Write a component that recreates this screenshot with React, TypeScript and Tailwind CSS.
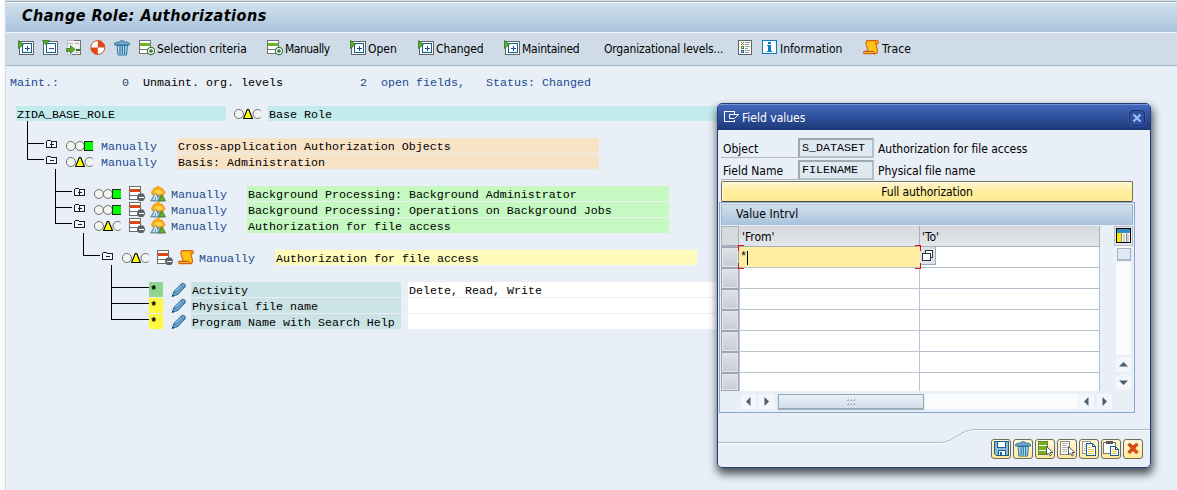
import React from "react";

const UI = "font-['DejaVu_Sans_Condensed','DejaVu_Sans',sans-serif] [font-stretch:condensed]";
const MONO = "font-['Liberation_Mono',monospace] text-[11.67px]";

type Kids = { children?: React.ReactNode };

function Icon({ children, smooth = false }: Kids & { smooth?: boolean }) {
  return (
    <svg width="16" height="16" viewBox="0 0 16 16" className="block shrink-0" shapeRendering={smooth ? "auto" : "crispEdges"}>
      {children}
    </svg>
  );
}

function ExpandIcon({ minus = false }: { minus?: boolean }) {
  return (
    <Icon>
      <rect x="1.5" y="1.5" width="14" height="13" fill="#fff" stroke="#5f6468" />
      <rect x="4.5" y="3.5" width="9" height="9" fill="#fff" stroke="#0b6394" />
      <path d="M6.500 8h5" stroke="#2b4c9a" />
      {!minus && <path d="M9 5.500v5" stroke="#2b4c9a" />}
      {minus ? (
        <path d="M.5 .5h7L4 5z" fill="#5cae1b" stroke="#2d7433" strokeWidth=".8" shapeRendering="auto" />
      ) : (
        <path d="M.5 .5v8L5.500 4.500z" fill="#5cae1b" stroke="#2d7433" strokeWidth=".8" shapeRendering="auto" />
      )}
    </Icon>
  );
}

function ListArrowIcon() {
  return (
    <Icon>
      <path d="M1.500 .5h13v14h-13z" fill="#f1f3f4" />
      <path d="M1.500 6V.5H8M1.500 12v2.500H6" stroke="#b9bdc0" fill="none" />
      <path d="M8 .5h6.500v14H6" fill="none" stroke="#6d7275" />
      <path d="M2 3.500h5M9 3.500h4M9 12.500h4" stroke="#b5b5b5" />
      <path d="M10 9.500h4" stroke="#2d7433" strokeWidth="2" />
      <path d="M.5 8.500h4V5.500l4.500 4-4.500 4V11.500h-4z" fill="#64b020" stroke="#2d7433" strokeWidth=".8" shapeRendering="auto" />
    </Icon>
  );
}

function QuarterIcon() {
  return (
    <Icon smooth>
      <circle cx="7.800" cy="7.500" r="7" fill="#fff" stroke="#c8501f" />
      <path d="M7.800 7.500V.5a7 7 0 0 1 7 7zM7.800 7.500v7a7 7 0 0 1-7-7z" fill="#dc4a12" />
    </Icon>
  );
}

function TrashIcon() {
  return (
    <Icon smooth>
      <path d="M3 5.500h10.500l-1 9.500H4z" fill="#b9dcee" stroke="#2a75a4" />
      <path d="M6 6v8M8.300 6v8M10.600 6v8" stroke="#2a75a4" strokeWidth="1.200" />
      <path d="M.5 5V3.500C2.500 2 5 2 5.500 2c0-1.700 5-1.700 5 0 2 0 4 .3 5 1.500V5z" fill="#7ba6c8" stroke="#2a75a4" />
    </Icon>
  );
}

function RowPlusIcon() {
  return (
    <Icon>
      <rect x=".5" y=".5" width="11" height="13" fill="#fff" stroke="#6f7376" />
      <path d="M0 9.500h11" stroke="#6f7376" />
      <path d="M1 3h10v3H1z" fill="#71b31e" />
      <circle cx="12" cy="11" r="3.600" fill="#fff" stroke="#3f7d45" strokeWidth="1.200" shapeRendering="auto" />
      <path d="M10 11h4M12 9v4" stroke="#2f7038" strokeWidth="1.300" shapeRendering="auto" />
    </Icon>
  );
}

function RowMinusIcon() {
  return (
    <Icon>
      <rect x=".5" y=".5" width="11" height="13" fill="#fff" stroke="#6a6e72" />
      <path d="M0 9.500h11" stroke="#6a6e72" />
      <path d="M1 3h10v3H1z" fill="#dc4a12" />
      <circle cx="12" cy="11.200" r="3.900" fill="#5d6266" shapeRendering="auto" />
      <path d="M9.500 11.500h5" stroke="#fff" strokeWidth="1.200" />
    </Icon>
  );
}

function LegendIcon() {
  return (
    <Icon>
      <rect x=".5" y=".5" width="13" height="14" fill="#fff" stroke="#5f6468" />
      <path d="M3 2h1v1H3zM5 2h1v1H5zM4 3h1v1H4zM3 4h1v1H3zM5 4h1v1H5z" fill="#a07b15" />
      <path d="M3 6h3v3H3z" fill="#3f8b2b" />
      <path d="M3 10h3v3H3z" fill="#0f6b9c" />
      <path d="M4 7h1v1H4zM4 11h1v1H4z" fill="#fff" />
      <path d="M7 2.500h5M7 4.500h4M7 6.500h5M7 8.500h3M7 10.500h5M7 12.500h4" stroke="#9a9a9a" />
    </Icon>
  );
}

function InfoIcon() {
  return (
    <Icon>
      <rect x=".5" y=".5" width="14" height="13" fill="#fff" stroke="#087fc0" />
      <path d="M6 2h3v2H6zM5 5h4v6h1v1H5v-1h1V6H5z" fill="#087fc0" />
    </Icon>
  );
}

function ScrollIcon() {
  return (
    <Icon smooth>
      <path
        d="M4 .6h10.200c1.600.3 1.600 3.200 0 3.400H13.200c-.3 2 1.300 4.500 1.300 7 0 2-1 2.600-2 2.600H1.500C.3 13.600.3 11.400 1.500 11.200H4.600C6 9.500 3.200 7 3 4 2.900 2 3.200.8 4 .6z"
        fill="#ffc211"
        stroke="#d4601a"
        strokeWidth="1.100"
      />
      <path d="M1 11.400h9.300c1.300.3 1.300 1.800.5 2.200M13 1.800c-.5.8-.5 1.600.2 2.200" fill="none" stroke="#c94d14" />
    </Icon>
  );
}

function MountainIcon() {
  return (
    <Icon smooth>
      <path d="M2 8C1.200 6 2.200 4.800 3 4.500 3 2.500 4.500 2 5.500 2c1-1.800 3.800-1.800 5 0 1.500 0 3 .8 3 2.500C15 5.500 15 7 14.300 8L12 10H4z" fill="#ffb00f" stroke="#f18a13" />
      <path d="M4 8a4.500 4.300 0 0 1 9 0z" fill="#ffd04a" />
      <path d="M.6 15 5.500 7l3 4 1.500-1.500L12 15z" fill="#7fb6d5" stroke="#5b7380" strokeWidth=".8" />
      <path d="M5.500 8 3.500 14M5.800 9l1.200 5" stroke="#e3f2fa" fill="none" />
      <path d="M8.500 15 12 8.500 15.500 15z" fill="#69ac28" stroke="#47742f" strokeWidth=".8" />
    </Icon>
  );
}

function PencilIcon() {
  return (
    <Icon smooth>
      <path d="M1.500 14.200 3 9.500 11 1.600c1.300-1.200 4.300 1.500 3 3L6.500 12.500z" fill="#7fb2d6" stroke="#2d6f9c" strokeWidth="1.100" />
      <path d="M10 2.800l3 3M5 10.500l6-6M3 9.800l3 2.500" stroke="#2d6f9c" strokeWidth=".9" />
      <path d="M4.500 9 10 3.500" stroke="#c3e0f0" strokeWidth=".8" />
      <path d="M.8 15l.9-2.700 1.600 1.800z" fill="#174b72" />
    </Icon>
  );
}

function Lights({ state }: { state: "green" | "yellow" }) {
  return (
    <svg width="28" height="16" viewBox="0 0 28 16" className="block shrink-0">
      <circle cx="4.900" cy="8" r="4.500" fill="#f3f3f0" stroke="#6f6f6f" />
      {state === "green" ? (
        <>
          <circle cx="13.900" cy="8" r="4.500" fill="#f3f3f0" stroke="#6f6f6f" />
          <path d="M27 3.500h-8.500v9H27" fill="#0f0" stroke="#222" shapeRendering="crispEdges" />
        </>
      ) : (
        <>
          <path d="M26.700 4.800a4.500 4.500 0 1 0 0 6.400" fill="#f3f3f0" stroke="#6f6f6f" />
          <path d="M9.600 12.500 13.300 3.500h1.400L18.400 12.500z" fill="#ff0" stroke="#000" strokeWidth="1.100" />
        </>
      )}
    </svg>
  );
}

function Folder({ open = false }: { open?: boolean }) {
  return (
    <svg width="12" height="16" viewBox="0 0 12 16" className="block shrink-0" shapeRendering="crispEdges">
      <path d="M.5 9.500v-6l1-1h3l1 1h5v6z" fill="#f4f6fb" stroke="#1c1c38" />
      <path d="M4 6.500h4" stroke="#1c1c38" />
      {!open && <path d="M5.500 4v5" stroke="#1c1c38" />}
    </svg>
  );
}

function Tool({ w, icon, label, tight = "" }: { w: string; icon?: React.ReactNode; label?: string; tight?: string }) {
  return (
    <div className={`flex h-4 shrink-0 items-center gap-0.5 whitespace-nowrap ${w}`}>
      {icon}
      {label && <span className={`pt-0.5 text-[12px] leading-4 ${tight}`}>{label}</span>}
    </div>
  );
}

function Toolbar() {
  return (
    <div className={`flex h-[33px] shrink-0 items-center border-b border-[#9fb6c9] bg-[#cfdce7] pb-[3px] pl-3 ${UI}`}>
      <Tool w="w-6" icon={<ExpandIcon />} />
      <Tool w="w-6" icon={<ExpandIcon minus />} />
      <Tool w="w-6" icon={<ListArrowIcon />} />
      <Tool w="w-6" icon={<QuarterIcon />} />
      <Tool w="w-[25px]" icon={<TrashIcon />} />
      <Tool w="w-32" icon={<RowPlusIcon />} label="Selection criteria" tight="tracking-[-0.1px]" />
      <Tool w="w-[83px]" icon={<RowPlusIcon />} label="Manually" tight="tracking-[-0.5px]" />
      <Tool w="w-[68px]" icon={<ExpandIcon />} label="Open" />
      <Tool w="w-[86px]" icon={<ExpandIcon />} label="Changed" tight="tracking-[-0.1px]" />
      <Tool w="w-[100px]" icon={<ExpandIcon />} label="Maintained" tight="tracking-[-0.25px]" />
      <Tool w="w-[134px]" label="Organizational levels..." tight="tracking-[-0.18px]" />
      <Tool w="w-6" icon={<LegendIcon />} />
      <Tool w="w-[101px]" icon={<InfoIcon />} label="Information" />
      <Tool w="w-20" icon={<ScrollIcon />} label="Trace" tight="pl-px tracking-[0.1px]" />
    </div>
  );
}

function Band({ className, children }: Kids & { className: string }) {
  return <div className={`h-[15px] shrink-0 pl-px leading-[18px] ${className}`}>{children}</div>;
}

function Row({ className = "", children }: Kids & { className?: string }) {
  return <div className={`flex h-4 items-start whitespace-pre ${className}`}>{children}</div>;
}

function Manually({ className }: { className: string }) {
  return <span className={`shrink-0 leading-[18px] text-[#1b4a94] ${className}`}>Manually</span>;
}

function ObjectRow({ open = false, state, label }: { open?: boolean; state: "green" | "yellow"; label: string }) {
  return (
    <Row className="pl-[68px]">
      <Folder open={open} />
      <div className="ml-2 flex"><Lights state={state} /></div>
      <div className="ml-[7px] flex gap-[5px]"><RowMinusIcon /><MountainIcon /></div>
      <Manually className="ml-[5px] w-[76px]" />
      <Band className="w-[422px] bg-[#c5f9c1]">{label}</Band>
    </Row>
  );
}

function FieldRow({ mark, label, value }: { mark: string; label: string; value?: string }) {
  return (
    <Row className="pl-[143px]">
      <div className={`h-[15px] w-3.5 shrink-0 pl-px text-[12px] font-bold leading-[18px] ${mark}`}>*</div>
      <div className="ml-2 w-5"><PencilIcon /></div>
      <Band className="w-[210px] bg-[#cbe3e4]">{label}</Band>
      <Band className="ml-[7px] w-[312px] bg-white">{value}</Band>
    </Row>
  );
}

function Tree() {
  return (
    <div className={`relative ${MONO}`}>
      <svg width="160" height="224" className="absolute left-0 top-0" fill="none" stroke="#000" shapeRendering="crispEdges">
        <path d="M21.500 15v38.500H38M21 37.500h17M49.500 63v54.500H66M49 85.500h17M49 101.500h17M77.500 127v22.500H94M105.500 159v54.500H143M105 181.500h38M105 197.500h38" />
      </svg>
      <Row className="pl-2.5">
        <Band className="w-[210px] bg-[#c3eaec]">ZIDA_BASE_ROLE</Band>
        <div className="ml-2 w-[34px]"><Lights state="yellow" /></div>
        <Band className="w-[452px] bg-[#c3eaec]">Base Role</Band>
      </Row>
      <Row />
      <Row className="pl-10">
        <Folder />
        <div className="ml-2 flex"><Lights state="green" /></div>
        <Manually className="ml-[7px] w-[76px]" />
        <Band className="w-[422px] bg-[#f9e3c7]">Cross-application Authorization Objects</Band>
      </Row>
      <Row className="pl-10">
        <Folder open />
        <div className="ml-2 flex"><Lights state="yellow" /></div>
        <Manually className="ml-[7px] w-[76px]" />
        <Band className="w-[422px] bg-[#f9e3c7]">Basis: Administration</Band>
      </Row>
      <Row />
      <ObjectRow state="green" label="Background Processing: Background Administrator" />
      <ObjectRow state="green" label="Background Processing: Operations on Background Jobs" />
      <ObjectRow open state="yellow" label="Authorization for file access" />
      <Row />
      <Row className="pl-24">
        <Folder open />
        <div className="ml-2 flex"><Lights state="yellow" /></div>
        <div className="ml-[7px] flex gap-[5px]"><RowMinusIcon /><ScrollIcon /></div>
        <Manually className="ml-[5px] w-[76px]" />
        <Band className="w-[422px] bg-[#fffbbb]">Authorization for file access</Band>
      </Row>
      <Row />
      <FieldRow mark="bg-[#90d58d]" label="Activity" value="Delete, Read, Write" />
      <FieldRow mark="bg-[#fff740]" label="Physical file name" />
      <FieldRow mark="bg-[#fff740]" label="Program Name with Search Help" />
    </div>
  );
}

function Arrow({ d }: { d: string }) {
  return (
    <div className="flex size-[15px] shrink-0 items-center justify-center bg-[#f3f7fb]">
      <svg width="9" height="9" viewBox="0 0 9 9"><path d={d} fill="#4a5f6e" /></svg>
    </div>
  );
}
const LEFT = "M6.500 0v9L2 4.500z";
const RIGHT = "M2.500 0v9L7 4.500z";
const UP = "M0 6.500h9L4.500 2z";
const DOWN = "M0 2.500h9L4.500 7z";

function Property({ name, value, text }: { name: string; value: string; text: string }) {
  return (
    <div className="flex h-[22px] text-[12px] leading-[22px]">
      <div className="h-[20px] w-[77px] border-b border-[#b3b9be] pl-0.5">{name}</div>
      <div className={`h-[20px] w-[76px] border-2 border-[#a0a8ae] border-b-[#b5bfc6] border-r-[#b5bfc6] bg-[#dfe9f1] pl-[2px] leading-[17px] ${MONO}`}>{value}</div>
      <div className="pl-1 tracking-[-0.03px]">{text}</div>
    </div>
  );
}

function GridRow({ active = false, last = false }: { active?: boolean; last?: boolean }) {
  return (
    <div className={`flex ${last ? "h-[18px]" : "h-[21px]"}`}>
      <div className="h-full w-[18px] border border-[#9da5b2] bg-gradient-to-b from-[#dfe3e8] to-[#c7ccd4] shadow-[inset_0_0_0_1px_#e2e5ea]" />
      {active ? (
        <div className="relative h-full w-[181px] border-b border-[#bcc5d0] bg-[#ffee9f] pl-px font-['Liberation_Mono',monospace] text-[12px] leading-[21px]">
          *
          <span className="absolute left-2 top-1 h-[14px] w-px bg-black" />
          <svg width="185" height="24" className="absolute -left-px -top-0.5" fill="none" stroke="#e30613" shapeRendering="crispEdges">
            <path d="M.5 6V.5H6M177 .5h5.500V6M.5 18v5.500H6M177 23.500h5.500V18" />
          </svg>
        </div>
      ) : (
        <div className={`h-full w-[181px] border-l border-r border-[#bcc5d0] bg-white ${last ? "" : "border-b"}`} />
      )}
      <div className={`h-full w-[180px] border-r border-[#b5bfcc] bg-white ${last ? "" : "border-b"}`}>
        {active && (
          <div className="flex h-[18px] w-4 items-center justify-center border-b border-r border-[#9ba9bd] bg-[#dde3ee]">
            <svg width="12" height="12" fill="#fff" stroke="#333" shapeRendering="crispEdges"><path d="M3.500.5h7v7h-7z" /><path d="M.5 3.500h8v7h-8z" /></svg>
          </div>
        )}
      </div>
    </div>
  );
}

function ActionButton({ children }: Kids) {
  return (
    <div className="flex size-5 items-center justify-center rounded-[3px] border-[1.5px] border-[#716b5b] bg-gradient-to-b from-[#fff9da] to-[#ffe996]">
      {children}
    </div>
  );
}

function Cursor() {
  return <path d="M9.500 5.500v8.500l2-2 1.500 3 1.500-1-1.500-2.500h3z" fill="#fff" stroke="#565b60" shapeRendering="auto" />;
}

function Actions() {
  return (
    <div className="flex gap-0.5">
      <ActionButton>
        <Icon>
          <path d="M1.500 .5h14v14h-12l-2-2z" fill="#8db8d9" stroke="#135f91" />
          <path d="M4.500 .5h8v6h-8z" fill="#fff" stroke="#135f91" />
          <path d="M5.500 9.500h7v5h-7z" fill="#fff" stroke="#135f91" />
          <path d="M7 11h2v3H7z" fill="#135f91" />
        </Icon>
      </ActionButton>
      <ActionButton><TrashIcon /></ActionButton>
      <ActionButton>
        <Icon>
          <path d="M1.500 .5h9v13h-9z" fill="#fff" stroke="#6c7a50" />
          <path d="M2 1h8v3H2zM2 5h8v4H2zM2 10h8v3H2z" fill="#72b31c" />
          <Cursor />
        </Icon>
      </ActionButton>
      <ActionButton>
        <Icon>
          <path d="M1.500 .5h9v13h-9z" fill="#fff" stroke="#898989" />
          <path d="M3 2.500h6M3 4.500h5M3 6.500h6M3 8.500h5M3 10.500h5" stroke="#b0b0b0" />
          <Cursor />
        </Icon>
      </ActionButton>
      <ActionButton>
        <Icon>
          <path d="M1.500 .5h8v12h-8z" fill="#fff" stroke="#9a9a90" />
          <path d="M3 3.500h2M3 5.500h2M3 7.500h2M3 9.500h2" stroke="#bbb" />
          <path d="M5.500 2.500h6l3 3v9h-9z" fill="#fff" stroke="#1b5f8f" />
          <path d="M11.500 2.500v3h3" fill="none" stroke="#1b5f8f" />
          <path d="M7 6.500h3M7 8.500h6M7 10.500h6M7 12.500h6" stroke="#f8c445" />
        </Icon>
      </ActionButton>
      <ActionButton>
        <Icon>
          <path d="M.5 1.500h12v11H.5z" fill="#fff" stroke="#77756d" />
          <path d="M3 0h7v3H3z" fill="#555" />
          <path d="M7.500 5.500h5l3 3v6h-8z" fill="#fff" stroke="#1b5f8f" />
          <path d="M12.500 5.500v3h3" fill="none" stroke="#1b5f8f" />
          <path d="M9 8.500h2M9 10.500h5M9 12.500h5" stroke="#f8c445" />
        </Icon>
      </ActionButton>
      <ActionButton>
        <Icon smooth>
          <path d="M2.800 3.800l2-1.600L8 5l3.200-2.800 2 1.600L10 7.300l3.200 3.600-2 1.600L8 9.700l-3.200 2.800-2-1.600L6 7.300z" fill="#df4a11" stroke="#b8420f" strokeWidth=".8" />
        </Icon>
      </ActionButton>
    </div>
  );
}

function FieldValuesDialog() {
  return (
    <div className={`absolute left-[717px] top-[103px] flex h-[365px] w-[434px] flex-col overflow-hidden rounded-[5px] border border-[#213c7d] bg-[#e8eff7] ${UI}`}>
      <div className="flex h-[26px] shrink-0 items-center border-t border-[#7893d0] bg-gradient-to-b from-[#4267bd] to-[#1c3878] pl-1.5 pr-[5px] text-[12px] text-white">
        <svg width="16" height="14" className="-mt-0.5" fill="none" stroke="#fff" shapeRendering="crispEdges"><path d="M10 4V1.500H.5v10H10V9.500" /><path d="M5.500 4.500v4h5l4-4z" shapeRendering="auto" /></svg>
        <span className="ml-0.5 flex-1 leading-4">Field values</span>
        <div className="flex size-4 items-center justify-center rounded-sm border border-[#182f69] bg-[#3150a0] shadow-[0_0_0_.5px_#4b6dbd]">
          <svg width="10" height="10" stroke="#9dbdff" strokeWidth="2.200"><path d="M1.500 1.500l7 7M8.500 1.500l-7 7" /></svg>
        </div>
      </div>
      <div className="shrink-0 pl-[3px] pt-[8px]">
        <Property name="Object" value="S_DATASET" text="Authorization for file access" />
        <Property name="Field Name" value="FILENAME" text="Physical file name" />
      </div>
      <div className="-mt-px ml-[3px] h-[21px] w-[412px] shrink-0 rounded-[2px] border border-[#77725f] border-b-[#4e4c45] bg-gradient-to-b from-[#fff7d0] via-[#ffee9f] to-[#ffe992] text-center text-[12px] leading-[21px] tracking-[-0.1px] shadow-[inset_1px_1px_0_#fffbe6]">
        Full authorization
      </div>
      <div className="ml-px h-[211px] w-[416px] shrink-0 border border-[#86a7c9] pl-px pt-px">
        <div className="h-[21px] w-[412px] border border-t-[#b5c7d8] border-l-[#9cb2c8] border-r-[#9cb2c8] border-b-[#a9bfd7] bg-gradient-to-b from-[#d0e1ec] to-[#abc4de] pl-3.5 text-[12px] leading-[19px] tracking-[0.1px]">Value Intrvl</div>
        <div className="flex h-[166px] pt-px">
          <div className="w-[379px]">
            <div className="flex h-[21px] border-b border-[#a7b0ba] bg-gradient-to-b from-[#d5d9dc] to-[#e4e7ea] text-[12px] leading-[22px]">
              <div className="w-[18px] border border-[#a7adb6] bg-[#d6dadd]" />
              <div className="w-[181px] border-r border-[#a7b0ba] pl-[3px]">'From'</div>
              <div className="w-[180px] border-r border-[#a7b0ba] pl-0.5">'To'</div>
            </div>
            <GridRow active />
            <GridRow /><GridRow /><GridRow /><GridRow /><GridRow />
            <GridRow last />
          </div>
          <div className="ml-3.5 w-[19px]">
            <div className="flex h-5 items-center justify-center border border-[#b7bcc2] bg-[#e5e8ea]">
              <Icon>
                <path d="M.5 .5h14v14H.5z" fill="#fff" stroke="#000" />
                <path d="M1 1h13v4H1z" fill="#2d8fc6" />
                <path d="M1 5h4v9H1z" fill="#ffe600" />
                <path d="M7 6h2v8H7zM11 6h2v8h-2z" fill="#ccc" />
                <path d="M5.500 4v10M10.500 4v10" stroke="#888" />
              </Icon>
            </div>
            <div className="ml-0.5 flex w-[15px] flex-col">
              <div className="h-[109px] bg-[#fafbfc] pl-px pt-0.5"><div className="h-3 w-3.5 border border-[#9fb3c8] bg-[#e0e9f1] shadow-[0_1px_1px_#b5bec8]" /></div>
              <div className="mt-0.5 flex flex-col gap-[3px]"><Arrow d={UP} /><Arrow d={DOWN} /></div>
            </div>
          </div>
        </div>
        <div className="mt-[3px] flex h-[15px] pl-5">
          <div className="flex gap-[3px]"><Arrow d={LEFT} /><Arrow d={RIGHT} /></div>
          <div className="ml-1 h-[15px] w-[300px] bg-[#fafbfc]">
            <div className="flex h-[15px] w-[146px] items-center justify-center border border-[#94a8bb] bg-gradient-to-b from-[#e9f1f8] to-[#d2deea] shadow-[0_1px_1px_#a7b4c1]">
              <div className="grid grid-cols-3 gap-x-px gap-y-0.5">
                {[0, 1, 2, 3, 4, 5].map((n) => <i key={n} className="size-0.5 border-b border-r border-[#a2b1c0] bg-white" />)}
              </div>
            </div>
          </div>
          <div className="ml-px flex gap-[3px]"><Arrow d={LEFT} /><Arrow d={RIGHT} /></div>
        </div>
      </div>
      <div className="relative flex flex-1 items-end justify-end pb-2 pr-[7px]">
        <svg width="432" height="20" className="absolute left-0 top-[14px]" fill="none">
          <path d="M0 16.500h222c14 0 20-13 35-13h175" stroke="#fff" />
          <path d="M0 15.500h222c14 0 20-13 35-13h175" stroke="#aab9cb" />
        </svg>
        <div className="relative"><Actions /></div>
      </div>
    </div>
  );
}

export default function App() {
  return (
    <div className="relative flex h-[490px] w-[1177px] overflow-hidden bg-[#e8eff6] text-black">
      <div className="w-[6px] shrink-0 border-r border-[#d0d9e5] bg-gradient-to-r from-white to-[#f4f7fa]" />
      <div className="flex min-w-0 flex-1 flex-col">
        <div className="h-0.5 shrink-0 border-b border-[#9dabb9] bg-[#d8e0e8]" />
        <div className={`h-[31px] shrink-0 border-y border-[#f0f5fa] bg-gradient-to-b from-[#d0e1ec] to-[#abc3de] pl-4 text-[16px] font-bold italic leading-[26px] tracking-[0.53px] ${UI}`}>
          Change Role: Authorizations
        </div>
        <Toolbar />
        <div className={`flex h-10 shrink-0 whitespace-pre pt-[9px] leading-4 text-[#1b4a94] ${MONO}`}>
          <span className="w-28 pl-1">Maint.:</span>
          <span className="w-[25px] pl-1 text-[#27486f]">0</span>
          <span className="w-[217px] text-black">Unmaint. org. levels</span>
          <span className="w-[21px]">2</span>
          <span className="w-[105px]">open fields,</span>
          <span>Status: Changed</span>
        </div>
        <Tree />
      </div>
      <div className="absolute left-[717px] top-[103px] h-[365px] w-[434px] rounded-[5px] shadow-[1px_5px_9px_1px_rgba(20,30,35,0.75)]" />
      <FieldValuesDialog />
    </div>
  );
}
